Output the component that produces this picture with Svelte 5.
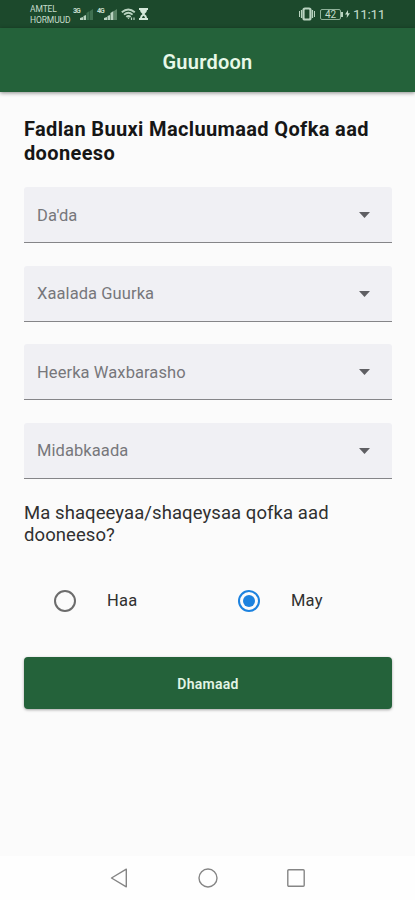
<script>
  const fields = ["Da'da", "Xaalada Guurka", "Heerka Waxbarasho", "Midabkaada"];
  const options = ["Haa", "May"];

  let working = $state("May");
</script>

<div class="screen">
  <div class="status">
    <div class="carrier">
      <span>AMTEL</span>
      <span>HORMUUD</span>
    </div>
    <div class="network">
      <span class="generation">3G</span>
      <svg class="signal" width="14" height="12" viewBox="0 0 14 12">
        <path d="M0 11V9l3-1v3zM3.500 11V7l2.500-1v5z" fill="#b9d3c0" />
        <path d="M6.500 11V4l3-2v9zM10 11V2l3-2v11z" fill="#3f7050" />
      </svg>
    </div>
    <div class="network">
      <span class="generation">4G</span>
      <svg class="signal" width="14" height="12" viewBox="0 0 14 12">
        <path d="M0 11V9l3-1v3zM3.500 11V7l2.500-1v5zM6.500 11V4l3-2v9z" fill="#b9d3c0" />
        <path d="M10 11V2l3-2v11z" fill="#5b8567" />
      </svg>
    </div>
    <svg class="wifi" width="15" height="13" viewBox="0 0 15 13" fill="none" stroke="#b9d3c0">
      <path d="M.8 4.200q6.500-5.500 13 0M3 6.600q4.300-3.700 8.600 0M5.300 8.900q2.200-1.800 4.400 0" stroke-width="1.800" />
      <path d="M6.300 9.500h2.400l-1.200 1.700z" fill="#b9d3c0" stroke="none" />
      <path d="M10.500 9.500v2.500M13 9.500v2.500" stroke-width="1.200" />
    </svg>
    <svg class="hourglass" width="9" height="12" viewBox="0 0 9 12">
      <path d="M0 0h9v2H8q0 2.500-2.500 4Q8 7.500 8 10h1v2H0v-2h1q0-2.500 2.500-4Q1 4.500 1 2H0z" fill="#d4e8d9" />
      <path d="M3 10q0-1.500 1.500-2.200Q6 8.500 6 10z" fill="#1c492c" />
    </svg>
    <svg class="vibrate" width="16" height="14" viewBox="0 0 16 14" fill="none" stroke="#b9d3c0">
      <rect x="4.500" y="1.500" width="7" height="11" rx="1.500" stroke-width="2.200" />
      <path d="M2.500 3v8M13.500 3v8" stroke-width="1.200" />
      <path d="M.5 4v6M15.500 4v6" stroke-width="1" />
    </svg>
    <div class="battery">42</div>
    <svg class="bolt" width="5" height="8" viewBox="0 0 5 8">
      <path d="M3 0 0 4.500h2L1.700 8 5 3.300H3z" fill="#c5dccb" />
    </svg>
    <time>11:11</time>
  </div>

  <header>
    <h1>Guurdoon</h1>
  </header>

  <main>
    <h2>Fadlan Buuxi Macluumaad Qofka aad dooneeso</h2>

    <div class="fields">
      {#each fields as field}
        <button class="field">
          <span>{field}</span>
          <svg width="11" height="6" viewBox="0 0 11 6">
            <path d="M0 0h11L5.500 6z" fill="#5f5f63" />
          </svg>
        </button>
      {/each}
    </div>

    <p>Ma shaqeeyaa/shaqeysaa qofka aad dooneeso?</p>

    <div class="options">
      {#each options as option}
        <label>
          <input type="radio" name="working" value={option} bind:group={working} />
          <span>{option}</span>
        </label>
      {/each}
    </div>

    <button class="submit">Dhamaad</button>
  </main>

  <nav>
    <svg width="18" height="20" viewBox="0 0 18 20">
      <path d="M16.300 1.200v17.600L1.500 10z" />
    </svg>
    <svg width="20" height="20" viewBox="0 0 20 20">
      <circle cx="10" cy="10" r="9" />
    </svg>
    <svg width="18" height="18" viewBox="0 0 18 18">
      <rect x=".8" y=".8" width="16.400" height="16.400" rx="1" />
    </svg>
  </nav>
</div>

<style>
  :global(body) {
    background: #fbfbfb;
  }

  .screen {
    display: flex;
    flex-direction: column;
    width: 415px;
    height: 900px;
    overflow: hidden;
    font-family: Roboto, sans-serif;
    color: #303030;
    background: #fbfbfb;
  }

  .status {
    display: flex;
    align-items: center;
    flex: none;
    box-sizing: border-box;
    height: 28px;
    padding: 0 30px 0 30px;
    color: #c5dccb;
    background: #1c492c;
  }

  .carrier {
    display: flex;
    flex-direction: column;
    width: 43px;
    padding-top: 2px;
    font-size: 8.5px;
    line-height: 11.5px;
    letter-spacing: -0.1px;
  }

  .network {
    display: flex;
    width: 24px;
  }

  .generation {
    width: 7px;
    font-size: 7px;
    font-weight: 700;
    line-height: 7px;
    letter-spacing: -0.9px;
  }

  .signal {
    margin-top: 1px;
  }

  .hourglass {
    margin-left: 3px;
  }

  .vibrate {
    margin-left: auto;
  }

  .battery {
    position: relative;
    box-sizing: border-box;
    width: 21px;
    height: 11px;
    margin-left: 5px;
    border: 1px solid #8fb199;
    border-radius: 2px;
    font-size: 10px;
    line-height: 9px;
    text-align: center;
  }

  .battery::after {
    content: "";
    position: absolute;
    top: 2px;
    right: -3px;
    width: 2px;
    height: 5px;
    background: #b9d3c0;
  }

  .bolt {
    margin: 0 3px 0 4px;
  }

  time {
    width: 32px;
    font-size: 13.5px;
    letter-spacing: -0.3px;
    white-space: nowrap;
  }

  header {
    display: flex;
    align-items: center;
    justify-content: center;
    flex: none;
    height: 64px;
    background: #24623a;
    box-shadow: 0 1px 4px rgba(0, 0, 0, 0.45);
  }

  h1 {
    margin: 3px 0 0;
    font-size: 20px;
    font-weight: 600;
    line-height: 24px;
    letter-spacing: 0.25px;
    color: #e7f8e8;
  }

  main {
    display: flex;
    flex-direction: column;
    flex: 1;
    padding: 25px 23px 0 24px;
  }

  h2 {
    margin: 0;
    font-size: 20px;
    font-weight: 700;
    line-height: 24px;
    letter-spacing: 0.36px;
    color: #161616;
  }

  .fields {
    display: flex;
    flex-direction: column;
    gap: 22.6px;
    margin-top: 22px;
  }

  .field {
    display: flex;
    align-items: center;
    justify-content: space-between;
    box-sizing: border-box;
    height: 56px;
    padding: 1px 22px 0 13px;
    border: 0;
    border-bottom: 1px solid #858588;
    border-radius: 3px 3px 0 0;
    font: 400 16.5px Roboto, sans-serif;
    letter-spacing: 0.08px;
    color: #77777b;
    background: #f0f0f4;
  }

  p {
    margin: 23px 0 0;
    font-size: 18.5px;
    line-height: 22px;
    letter-spacing: 0.08px;
  }

  .options {
    display: flex;
    margin-top: 43px;
  }

  label {
    display: flex;
    align-items: center;
    gap: 31px;
    flex: 1;
    height: 24px;
    padding-left: 30px;
    font-size: 16.5px;
    letter-spacing: 0.2px;
  }

  input {
    display: grid;
    place-items: center;
    appearance: none;
    box-sizing: border-box;
    width: 22px;
    height: 22px;
    margin: 0;
    border: 2px solid #6c6c6c;
    border-radius: 50%;
  }

  input:checked {
    border-color: #1c82df;
  }

  input:checked::before {
    content: "";
    width: 12px;
    height: 12px;
    border-radius: 50%;
    background: #1c82df;
  }

  .submit {
    height: 52px;
    margin-top: 44px;
    padding: 2px 0 0;
    border: 0;
    border-radius: 4px;
    font: 600 14px Roboto, sans-serif;
    letter-spacing: 0.25px;
    color: #e2f5e5;
    background: #24623a;
    box-shadow: 0 1px 3px rgba(0, 0, 0, 0.35);
  }

  nav {
    display: flex;
    align-items: center;
    justify-content: space-between;
    flex: none;
    height: 44px;
    padding: 0 110px;
    background: #fefefe;
  }

  nav svg {
    fill: none;
    stroke: #858585;
    stroke-width: 1.4;
    stroke-linejoin: round;
  }
</style>
